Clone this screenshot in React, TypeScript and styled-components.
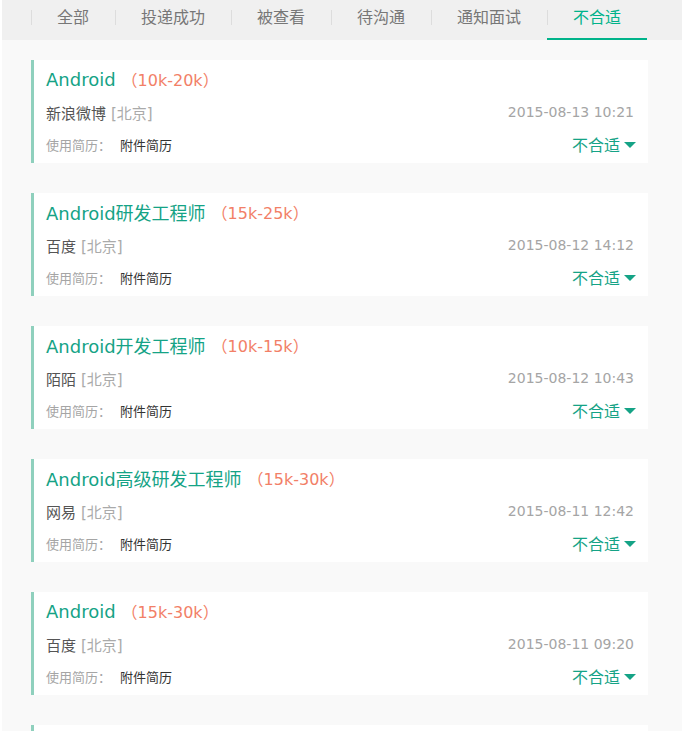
import React from "react";
import styled, { createGlobalStyle } from "styled-components";

const GlobalStyle = createGlobalStyle`
  body {
    margin: 0;
    background: #fff;
    font-family: "DejaVu Sans", "Noto Sans CJK SC", sans-serif;
  }
`;

const Base = styled.div`
  margin: 0 2px;
  min-height: 731px;
  background: #f9f9f9;
`;
const TabBar = styled.ul`
  display: flex;
  margin: 0;
  padding: 0 0 0 29px;
  height: 40px;
  list-style: none;
  background: #f0f0f0;
`;
const Tab = styled.li<{ $active?: boolean }>`
  position: relative;
  box-sizing: border-box;
  height: 40px;
  padding: 0 26px;
  line-height: 36px;
  font-size: 16px;
  color: ${(props) => (props.$active ? "#00b38a" : "#777")};
  border-bottom: 2px solid
    ${(props) => (props.$active ? "#00b38a" : "transparent")};
  &::before {
    content: "";
    position: absolute;
    left: 0;
    top: 10px;
    width: 1px;
    height: 15px;
    background: #ddd;
  }
`;
const List = styled.div`
  display: flex;
  flex-direction: column;
  gap: 30px;
  padding: 20px 34px 20px 29px;
`;
const Card = styled.div`
  display: flex;
  flex-direction: column;
  gap: 11px;
  padding: 8px 12px 9px 12px;
  background: #fff;
  border-left: 3px solid #8fd0bd;
`;
const Title = styled.div`
  display: flex;
  align-items: center;
  height: 22px;
  font-size: 18px;
  color: #15a386;
`;
const Salary = styled.span`
  margin-left: 6px;
  font-size: 16px;
  color: #f27f67;
`;
const Row = styled.div<{ $small?: boolean }>`
  display: flex;
  justify-content: space-between;
  align-items: center;
  height: ${(props) => (props.$small ? "20px" : "22px")};
`;
const Company = styled.span`
  font-size: 15px;
  color: #555;
`;
const City = styled.span`
  margin-left: 5px;
  color: #aaa;
`;
const Time = styled.span`
  margin-right: 2px;
  font-size: 14px;
  color: #a5a5a5;
`;
const Label = styled.span`
  font-size: 13px;
  color: #a5a5a5;
`;
const Value = styled.span`
  margin-left: 9px;
  font-size: 13px;
  color: #333;
`;
const Status = styled.span`
  display: flex;
  align-items: center;
  gap: 4px;
  font-size: 16px;
  color: #15a386;
`;
const Caret = styled.i`
  width: 0;
  height: 0;
  border-left: 6px solid transparent;
  border-right: 6px solid transparent;
  border-top: 6px solid #15a386;
  margin-top: 2px;
`;

const tabs = ["全部", "投递成功", "被查看", "待沟通", "通知面试", "不合适"];

const records = [
  { job: "Android", salary: "10k-20k", company: "新浪微博", time: "2015-08-13 10:21" },
  { job: "Android研发工程师", salary: "15k-25k", company: "百度", time: "2015-08-12 14:12" },
  { job: "Android开发工程师", salary: "10k-15k", company: "陌陌", time: "2015-08-12 10:43" },
  { job: "Android高级研发工程师", salary: "15k-30k", company: "网易", time: "2015-08-11 12:42" },
  { job: "Android", salary: "15k-30k", company: "百度", time: "2015-08-11 09:20" },
  { job: "Android工程师", salary: "10k-20k", company: "美团", time: "2015-08-10 16:05" },
];

export default function App() {
  return (
    <Base>
      <GlobalStyle />
      <TabBar>
        {tabs.map((tab, index) => (
          <Tab key={index} $active={tab === "不合适"}>
            {tab}
          </Tab>
        ))}
      </TabBar>
      <List>
        {records.map((item, index) => (
          <Card key={index}>
            <Title>
              {item.job}
              <Salary>（{item.salary}）</Salary>
            </Title>
            <Row>
              <Company>
                {item.company}
                <City>[北京]</City>
              </Company>
              <Time>{item.time}</Time>
            </Row>
            <Row $small>
              <span>
                <Label>使用简历：</Label>
                <Value>附件简历</Value>
              </span>
              <Status>
                不合适
                <Caret />
              </Status>
            </Row>
          </Card>
        ))}
      </List>
    </Base>
  );
}
